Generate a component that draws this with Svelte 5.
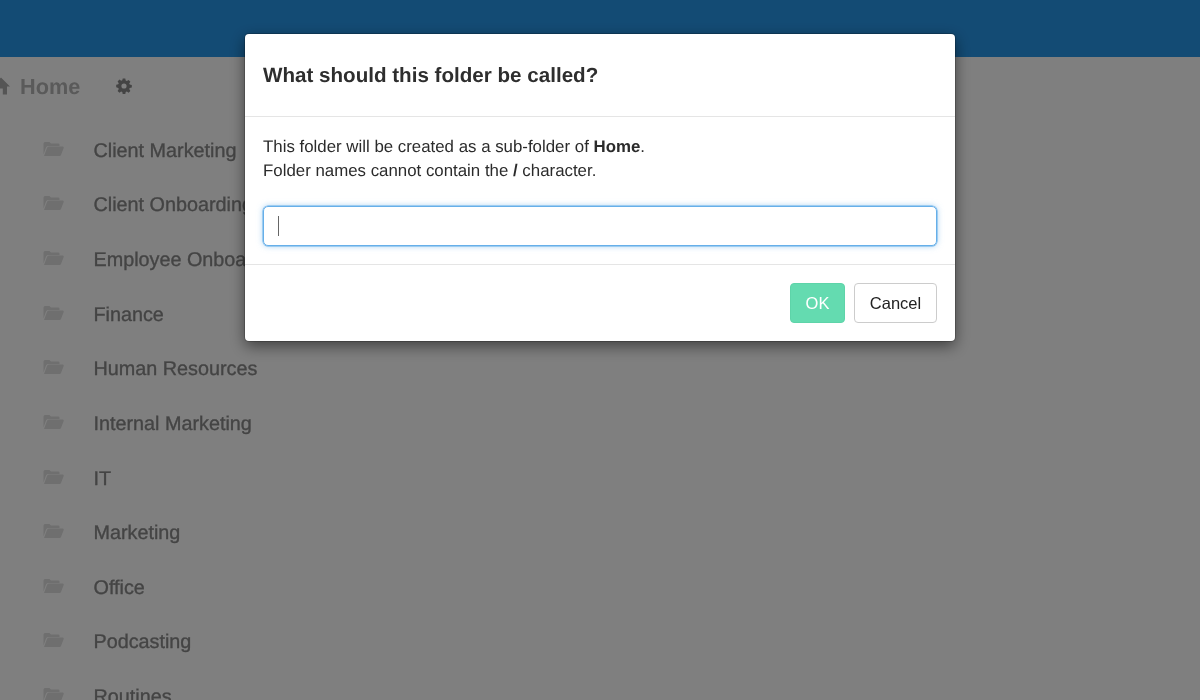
<script>
  const folders = ['Client Marketing','Client Onboarding','Employee Onboarding','Finance','Human Resources','Internal Marketing','IT','Marketing','Office','Podcasting','Routines'];
</script>

<div class="page">
  <header class="topbar"></header>
  <div class="crumbs">
    <svg class="home" viewBox="0 0 20 20" aria-hidden="true"><path d="M10 1.5 L19 10.5 L16 10.5 L16 18.5 L11.8 18.5 L11.8 12.5 L8.2 12.5 L8.2 18.5 L4 18.5 L4 10.5 L1 10.5 Z"/></svg>
    <span class="home-label">Home</span>
    <svg class="gear" viewBox="0 0 16 16" aria-hidden="true"><path fill-rule="evenodd" d="M6.7 0.5h2.6l.4 2.1c.4.1.8.3 1.1.5l1.8-1.2 1.8 1.8-1.2 1.8c.2.4.4.7.5 1.1l2.1.4v2.6l-2.1.4c-.1.4-.3.8-.5 1.1l1.2 1.8-1.8 1.8-1.8-1.2c-.3.2-.7.4-1.1.5l-.4 2.1H6.7l-.4-2.1c-.4-.1-.8-.3-1.1-.5l-1.8 1.2-1.8-1.8 1.2-1.8c-.2-.3-.4-.7-.5-1.1L.2 9.3V6.7l2.1-.4c.1-.4.3-.7.5-1.1L1.6 3.4l1.8-1.8 1.8 1.2c.3-.2.7-.4 1.1-.5zM8 5.4a2.6 2.6 0 1 0 0 5.2 2.6 2.6 0 0 0 0-5.2z"/></svg>
  </div>
  <ul class="folders">
    {#each folders as name}
      <li>
        <svg class="folder" viewBox="0 0 21 16" aria-hidden="true"><path d="M0.5 13.5 L0.5 2.5 Q0.5 1 2 1 L6.5 1 L8 2.5 L15.5 2.5 Q16.5 2.5 16.5 3.5 L16.5 5 L5 5 Q3.6 5 3 6.5 Z"/><path d="M1 15 L4 7 Q4.5 5.5 5.8 5.5 L20 5.5 Q21 5.5 20.7 7 L18 14 Q17.6 15 16.6 15 Z"/></svg>
        <span>{name}</span>
      </li>
    {/each}
  </ul>
</div>

<div class="backdrop">
  <div class="modal">
    <div class="modal-header"><h4>What should this folder be called?</h4></div>
    <div class="modal-body">
      <p>This folder will be created as a sub-folder of <b>Home</b>.<br />Folder names cannot contain the <b>/</b> character.</p>
      <div class="input"><i class="caret"></i></div>
    </div>
    <div class="modal-footer">
      <button class="ok"><span>OK</span></button>
      <button class="cancel"><span>Cancel</span></button>
    </div>
  </div>
</div>

<style>
  :global(body) { margin: 0; font-family: "Liberation Sans", Arial, sans-serif; overflow: hidden; text-rendering: geometricPrecision; }
  .page { height: 700px; overflow: hidden; background: #fff; }
  .topbar { height: 57px; background: #2796e8; }
  .crumbs { display: flex; align-items: center; height: 60px; margin-left: -9px; will-change: transform; }
  .home { width: 20px; height: 20px; fill: #aaa; margin-right: 9px; margin-top: -2px; }
  .home-label { font-size: 21.7px; font-weight: 700; color: #b5b5b5; }
  .gear { width: 16px; height: 16px; fill: #888; margin-left: 35.5px; margin-top: -3px; }
  .folders { list-style: none; margin: 7px 0 0; padding: 0 0 0 43px; will-change: transform; }
  .folders li { display: flex; align-items: center; height: 54.63px; }
  .folder { width: 21px; height: 16px; fill: #dedede; margin-top: -5px; }
  .folders span { margin-left: 29.5px; font-size: 19.8px; -webkit-text-stroke: 0.35px #888; color: #888; white-space: nowrap; }
  .backdrop { position: fixed; inset: 0; background: rgba(0,0,0,.5); display: flex; justify-content: center; align-items: flex-start; padding-top: 34px; box-sizing: border-box; }
  .modal { width: 710px; background: #fff; border-radius: 4px; box-shadow: 0 0 0 1px rgba(0,0,0,.2), 0 5px 15px rgba(0,0,0,.5); color: #333; }
  .modal-header { height: 83px; box-sizing: border-box; padding: 1px 18px 0; border-bottom: 1px solid #e5e5e5; display: flex; align-items: center; }
  h4 { margin: 0; font-size: 20.6px; font-weight: 700; color: #2e2e2e; will-change: transform; }
  .modal-body { height: 147px; box-sizing: border-box; padding: 18px 18px 0; }
  p { margin: 0; font-size: 16.85px; line-height: 24px; color: #2b2b2b; will-change: transform; }
  .input { margin-top: 23px; height: 40px; box-sizing: border-box; border: 1px solid #66afe9; border-radius: 5px; box-shadow: 0 0 0 0.5px #66afe9, 0 0 6px rgba(102,175,233,.6); display: flex; align-items: center; padding-left: 14px; }
  .caret { width: 1px; height: 20px; background: #666; }
  .modal-footer { height: 77px; box-sizing: border-box; border-top: 1px solid #e5e5e5; display: flex; justify-content: flex-end; align-items: flex-start; gap: 9px; padding: 18px 18px 0; }
  button { height: 40px; border-radius: 4px; font: 16.5px "Liberation Sans", Arial, sans-serif; box-sizing: border-box; padding: 0; }
  button span { display: block; will-change: transform; }
  .ok { width: 55px; background: #64dbb0; border: 1px solid #5ed4a9; color: #fff; }
  .cancel { width: 83px; background: #fff; border: 1px solid #ccc; color: #222; }
</style>
